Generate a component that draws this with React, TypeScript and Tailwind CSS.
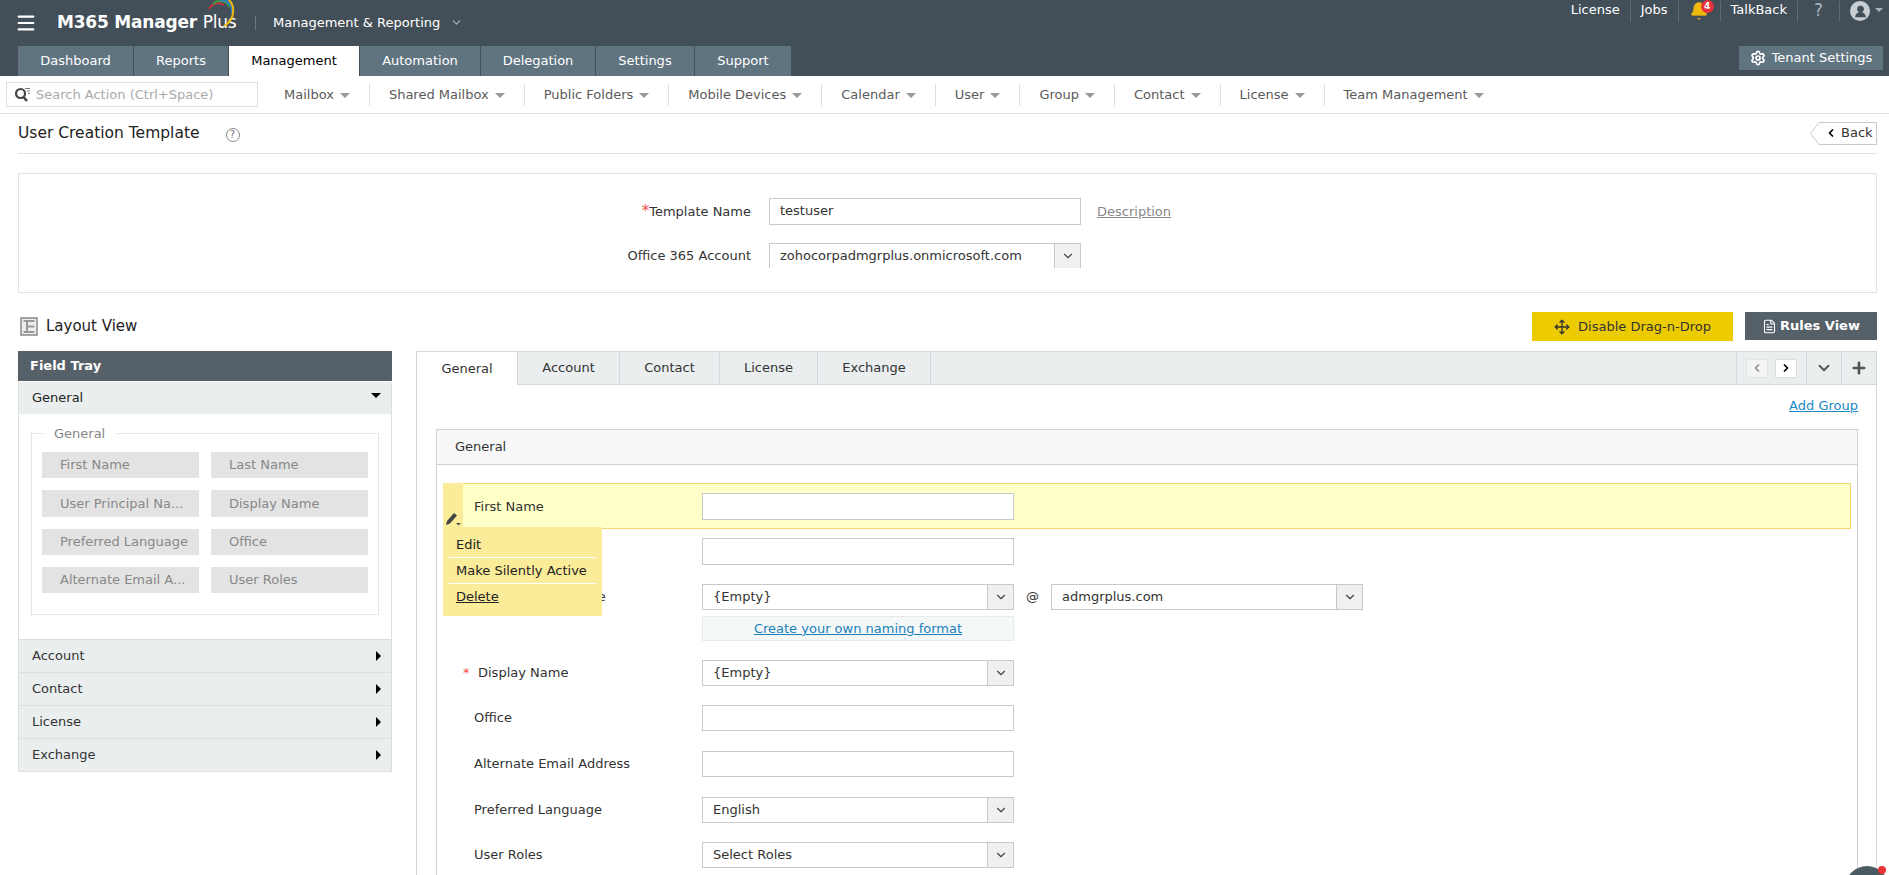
import { ChevronDown, ChevronLeft, ChevronRight, Plus, Menu, Bell, Settings, Move, FileText, UserRound } from "lucide-react";

const tabs = [
  { name: "Dashboard", w: "w-[115px]" },
  { name: "Reports", w: "w-[94px]" },
  { name: "Management", w: "w-[130px]", active: true },
  { name: "Automation", w: "w-[120px]" },
  { name: "Delegation", w: "w-[114px]" },
  { name: "Settings", w: "w-[98px]" },
  { name: "Support", w: "w-[96px]" },
];

const subNav = ["Mailbox", "Shared Mailbox", "Public Folders", "Mobile Devices", "Calendar", "User", "Group", "Contact", "License", "Team Management"];

const chips = [
  ["First Name", "Last Name", "h-[26px]"],
  ["User Principal Na...", "Display Name", "h-[27px]"],
  ["Preferred Language", "Office", "h-[26px]"],
  ["Alternate Email A...", "User Roles", "h-[26px]"],
];

const Caret = () => <span className="inline-block w-0 h-0 border-x-[5px] border-x-transparent border-t-[5px] border-t-[#999] ml-[6px] mt-[2px]"></span>;

const Select = ({ value, className = "w-[312px]", noBottom = false }: { value: string; className?: string; noBottom?: boolean }) => (
  <div className={`flex h-full border border-[#c9c9c9] bg-white ${noBottom ? "border-b-0" : ""} ${className}`}>
    <span className="flex-1 pl-[10px] leading-[24px] text-[#333]">{value}</span>
    <span className="w-[26px] flex items-center justify-center bg-[#f0f0f0] border-l border-[#c9c9c9]">
      <ChevronDown size={14} strokeWidth={2} className="text-[#444]" />
    </span>
  </div>
);

const Input = ({ value = "" }: { value?: string }) => (
  <div className="w-[312px] h-full border border-[#c9c9c9] bg-white pl-[10px] leading-[24px] text-[#333]">{value}</div>
);

const TrayRow = ({ name }: { name: string }) => (
  <div className="h-[33px] flex items-center justify-between pl-[13px] pr-[10px] bg-[#ebeeef] border-b border-x border-[#dcdfe0] text-[#333]">
    {name}
    <span className="w-0 h-0 border-y-[5px] border-y-transparent border-l-[5px] border-l-black"></span>
  </div>
);

export default function App() {
  return (
    <div className="relative h-[875px] overflow-hidden bg-white font-['DejaVu_Sans',sans-serif] text-[13px] text-[#333]">
      <header className="h-[76px] bg-[#434f58] flex flex-col">
        <div className="h-[46px] flex justify-between">
          <div className="flex items-center h-[46px] pb-[1px] text-white">
            <Menu size={22} strokeWidth={2.4} className="ml-[15px]" />
            <div className="relative ml-[20px] text-[17px] font-bold tracking-[-0.2px] w-[180px] whitespace-nowrap">
              M365 Manager <span className="font-normal">Plus</span>
              <svg className="absolute left-[147px] -top-[12px]" width="34" height="30" viewBox="0 0 34 30" fill="none">
                <path d="M5 11C8 5 15 4 20 7" stroke="#c8323c" strokeWidth="2" />
                <path d="M9 6C14 1 22 2 26 9" stroke="#3f9e4a" strokeWidth="2" />
                <path d="M16 2C24 1 29 8 28 16" stroke="#2f7fc4" strokeWidth="2" />
                <path d="M24 1C31 7 32 21 20 28" stroke="#efb90f" strokeWidth="2" />
              </svg>
            </div>
            <span className="w-px h-[14px] bg-[#6b7780] ml-[18px]"></span>
            <span className="ml-[17px]">Management &amp; Reporting</span>
            <ChevronDown size={13} className="ml-[10px] text-[#aab3b9]" />
          </div>
          <div className="flex items-start text-white pt-[1px] pr-[6px]">
            <span className="h-[21px] leading-[18px] pr-[10px] border-r border-[#5f6b73]">License</span>
            <span className="h-[21px] leading-[18px] px-[10px] border-r border-[#5f6b73]">Jobs</span>
            <span className="relative h-[21px] w-[42px] border-r border-[#5f6b73]">
              <Bell size={20} fill="#efb90f" strokeWidth={1} className="absolute left-[10px] top-0 text-[#efb90f]" />
              <span className="absolute left-[22px] -top-[1px] w-[13px] h-[13px] rounded-full bg-[#e8323c] text-[9px] font-bold leading-[13px] text-center">4</span>
            </span>
            <span className="h-[21px] leading-[18px] px-[10px] border-r border-[#5f6b73]">TalkBack</span>
            <span className="h-[21px] w-[42px] text-center text-[17px] leading-[19px] text-[#aab3b9] border-r border-[#5f6b73]">?</span>
            <span className="ml-[10px] w-[20px] h-[20px] rounded-full bg-[#c9ced2] flex items-center justify-center">
              <UserRound size={15} fill="#434f58" strokeWidth={1} className="text-[#434f58]" />
            </span>
            <span className="w-0 h-0 ml-[5px] mt-[7px] border-x-[4px] border-x-transparent border-t-[4px] border-t-[#aab3b9]"></span>
          </div>
        </div>
        <div className="flex-1 flex justify-between pl-[18px] pr-[6px]">
          <div className="flex gap-px">
            {tabs.map((t) => (
              <div key={t.name} className={`${t.w} flex items-center justify-center ${t.active ? "bg-white text-black" : "bg-[#607480] text-white"}`}>{t.name}</div>
            ))}
          </div>
          <div className="w-[144px] h-[24px] bg-[#607480] text-white flex items-center justify-center gap-[6px]">
            <Settings size={16} strokeWidth={2.6} />
            Tenant Settings
          </div>
        </div>
      </header>

      <nav className="h-[38px] flex items-center border-b border-[#e3e3e3] pl-[6px] text-[#5a5a5a]">
        <div className="w-[252px] h-[25px] border border-[#e0e0e0] flex items-center text-[#aaa] mr-[7px]">
          <svg className="ml-[7px] mr-[5px]" width="17" height="17" viewBox="0 0 17 17" fill="none">
            <circle cx="6.5" cy="7.5" r="4.5" stroke="#444" strokeWidth="2.2" />
            <path d="M9.5 11l3.5 4" stroke="#444" strokeWidth="2.6" />
            <path d="M11 2.5h5M13 5h3M14 7.500h2" stroke="#777" strokeWidth="1.2" />
          </svg>
          Search Action (Ctrl+Space)
        </div>
        {subNav.map((item, i) => (
          <div key={item} className={`h-[22px] flex items-center px-[19px] ${i < subNav.length - 1 ? "border-r border-[#dfdfdf]" : ""}`}>
            {item}
            <Caret />
          </div>
        ))}
      </nav>

      <div className="mx-[18px] mr-[12px] h-[40px] flex items-center justify-between border-b border-[#e3e3e3]">
        <div className="flex items-center">
          <h1 className="text-[15.5px] text-[#222]">User Creation Template</h1>
          <span className="ml-[26px] mt-[3px] w-[14px] h-[14px] rounded-full border border-[#888] text-[10px] leading-[12px] text-center text-[#777]">?</span>
        </div>
        <div className="relative w-[67px] h-[23px] flex items-center pl-[15px] gap-[4px] mb-[1px] text-[#333]">
          <svg className="absolute inset-0" width="67" height="23" viewBox="0 0 67 23" fill="none">
            <path d="M66.500.500V22.500H9L.500 11.500 9 .500Z" stroke="#c9c9c9" fill="#fff" />
          </svg>
          <ChevronLeft size={12} strokeWidth={3.500} className="relative text-black" />
          <span className="relative">Back</span>
        </div>
      </div>

      <section className="ml-[18px] mr-[12px] mt-[19px] h-[120px] border border-[#e3e3e3] flex flex-col pt-[24px]">
        <div className="h-[27px] flex items-center">
          <div className="w-[732px] text-right pr-[0px]"><span className="text-[#f04b4b] text-[15px]">*</span>Template Name</div>
          <div className="h-full ml-[18px]"><Input value="testuser" /></div>
          <span className="ml-[16px] text-[#888] underline">Description</span>
        </div>
        <div className="h-[25px] mt-[18px] flex items-center">
          <div className="w-[732px] text-right">Office 365 Account</div>
          <div className="h-full ml-[18px]"><Select value="zohocorpadmgrplus.onmicrosoft.com" noBottom /></div>
        </div>
      </section>

      <div className="ml-[18px] mr-[12px] mt-[19px] h-[29px] flex items-center justify-between">
        <div className="flex items-center text-[15px] text-[#222]">
          <svg className="ml-[2px] mr-[8px]" width="18" height="19" viewBox="0 0 18 19" fill="none">
            <rect x="1" y="1" width="16" height="17" stroke="#888" strokeWidth="1.500" fill="#eee" />
            <path d="M3.500 4h11M7 4v11M3.500 15h11M7 9.500h7.500" stroke="#999" strokeWidth="2" />
          </svg>
          Layout View
        </div>
        <div className="flex gap-[12px] items-start h-full">
          <div className="w-[201px] h-[29px] bg-[#eccb00] flex items-center justify-center gap-[8px] text-[#333]">
            <Move size={16} strokeWidth={2} />
            Disable Drag-n-Drop
          </div>
          <div className="w-[132px] h-[28px] bg-[#566068] flex items-center justify-center gap-[3px] text-white font-bold">
            <FileText size={15} strokeWidth={1.800} />
            Rules View
          </div>
        </div>
      </div>

      <main className="ml-[18px] mr-[12px] mt-[10px] flex gap-[24px] items-start">
        <aside className="w-[374px] shrink-0">
          <div className="h-[30px] bg-[#566068] text-white font-bold flex items-center pl-[12px]">Field Tray</div>
          <div className="h-[32px] mt-px flex items-center justify-between pl-[13px] pr-[10px] bg-[#ebeeef] border-x border-[#dcdfe0] text-[#222]">
            General
            <span className="w-0 h-0 mb-[6px] border-x-[5px] border-x-transparent border-t-[5px] border-t-black"></span>
          </div>
          <div className="h-[226px] border-x border-b border-[#dcdfe0] px-[12px] pt-[19px]">
            <div className="relative h-[182px] border border-[#e3e6e7] px-[10px] pt-[18px]">
              <span className="absolute left-[11px] -top-[10px] bg-white px-[11px] text-[#888]">General</span>
              <div className="flex flex-col gap-[12px]">
                {chips.map(([a, b, h]) => (
                  <div key={a} className="flex gap-[12px]">
                    <div className={`w-[157px] ${h} bg-[#e3e3e3] text-[#888] pl-[18px] flex items-center whitespace-nowrap`}>{a}</div>
                    <div className={`w-[157px] ${h} bg-[#e3e3e3] text-[#888] pl-[18px] flex items-center whitespace-nowrap`}>{b}</div>
                  </div>
                ))}
              </div>
            </div>
          </div>
          <TrayRow name="Account" />
          <TrayRow name="Contact" />
          <TrayRow name="License" />
          <TrayRow name="Exchange" />
        </aside>

        <div className="flex-1 h-[600px] border-x border-t border-[#d5d9db]">
          <div className="h-[33px] flex bg-[#ebeeef] border-b border-[#d5d9db]">
            <div className="w-[101px] -mb-px bg-white border-r border-[#d5d9db] flex items-center justify-center">General</div>
            <div className="w-[102px] border-r border-[#d5d9db] flex items-center justify-center">Account</div>
            <div className="w-[100px] border-r border-[#d5d9db] flex items-center justify-center">Contact</div>
            <div className="w-[98px] border-r border-[#d5d9db] flex items-center justify-center">License</div>
            <div className="w-[113px] border-r border-[#d5d9db] flex items-center justify-center">Exchange</div>
            <div className="ml-auto flex">
              <div className="w-[70px] flex items-center justify-center gap-[7px] border-l border-[#d5d9db]">
                <span className="w-[22px] h-[19px] bg-[#f3f4f4] border border-[#e3e5e6] flex items-center justify-center"><ChevronLeft size={12} strokeWidth={3} className="text-[#888]" /></span>
                <span className="w-[22px] h-[19px] bg-white border border-[#dcdfe0] flex items-center justify-center"><ChevronRight size={12} strokeWidth={3.500} className="text-black" /></span>
              </div>
              <div className="w-[35px] flex items-center justify-center border-l border-[#d5d9db]"><ChevronDown size={18} strokeWidth={2.500} className="text-[#555]" /></div>
              <div className="w-[35px] flex items-center justify-center border-l border-[#d5d9db]"><Plus size={18} strokeWidth={3.500} className="text-[#555]" /></div>
            </div>
          </div>

          <div className="h-[44px] flex items-center justify-end pr-[18px] pb-[2px]">
            <span className="text-[#1a8ac8] underline">Add Group</span>
          </div>

          <div className="relative ml-[19px] mr-[18px] h-[520px] border-x border-t border-[#d0d0d0]">
            <div className="h-[35px] bg-[#f8f8f8] border-b border-[#d0d0d0] flex items-center pl-[18px]">General</div>

            <div className="relative mt-[18px] mx-[6px] h-[46px] bg-[#ffffc8] border border-[#f5d76e] flex items-center pl-[30px] pt-[1px]">
              <span className="w-[228px]">First Name</span>
              <div className="h-[27px]"><Input /></div>
            </div>

            <div className="flex items-center h-[27px] mt-[9px] pl-[37px]">
              <span className="w-[228px]">Last Name</span>
              <Input />
            </div>
            <div className="flex items-center h-[26px] mt-[19px] pl-[26px]">
              <span className="text-[#f04b4b] w-[11px]">*</span>
              <span className="w-[228px]">User Principal Name</span>
              <Select value="{Empty}" />
              <span className="w-[37px] text-center">@</span>
              <Select value="admgrplus.com" />
            </div>
            <div className="ml-[265px] w-[312px] h-[25px] mt-[6px] bg-[#f5f8f8] border border-[#e6eaeb] flex items-center justify-center">
              <span className="text-[#1a7fb8] underline">Create your own naming format</span>
            </div>
            <div className="flex items-center h-[26px] mt-[19px] pl-[26px]">
              <span className="text-[#f04b4b] w-[15px]">*</span>
              <span className="w-[224px]">Display Name</span>
              <Select value="{Empty}" />
            </div>
            <div className="flex items-center h-[26px] mt-[19px] pl-[37px]">
              <span className="w-[228px]">Office</span>
              <Input />
            </div>
            <div className="flex items-center h-[26px] mt-[20px] pl-[37px]">
              <span className="w-[228px]">Alternate Email Address</span>
              <Input />
            </div>
            <div className="flex items-center h-[26px] mt-[20px] pl-[37px]">
              <span className="w-[228px]">Preferred Language</span>
              <Select value="English" />
            </div>
            <div className="flex items-center h-[26px] mt-[19px] pl-[37px]">
              <span className="w-[228px]">User Roles</span>
              <Select value="Select Roles" />
            </div>

            {/* edit menu sits over the first rows */}
            <div className="absolute left-[6px] top-[53px] w-[20px] h-[45px] bg-[#fbec99] flex items-end justify-center pb-[2px]">
              <svg width="17" height="15" viewBox="0 0 17 15" fill="none">
                <path d="M1 14l1-4 7-8 3 2.500-7 8Z" fill="#444" />
                <path d="M11 12h5l-2.500 2.500Z" fill="#555" />
              </svg>
            </div>
            <div className="absolute left-[6px] top-[97px] w-[159px] h-[89px] bg-[#fbec99] px-[6px] pt-[5px] text-[#222]">
              <div className="h-[26px] pl-[7px] leading-[26px] border-b border-white">Edit</div>
              <div className="h-[26px] pl-[7px] leading-[26px] border-b border-white whitespace-nowrap">Make Silently Active</div>
              <div className="h-[26px] pl-[7px] leading-[26px] underline">Delete</div>
            </div>
          </div>
        </div>
      </main>

      {/* chat bubble, cut off by the bottom of the window */}
      <div className="absolute left-[1845px] top-[866px] w-[44px] h-[44px] rounded-full bg-[#4a5a63]"></div>
      <div className="absolute left-[1878px] top-[866px] w-[8px] h-[8px] rounded-full bg-[#ee3338]"></div>
    </div>
  );
}
